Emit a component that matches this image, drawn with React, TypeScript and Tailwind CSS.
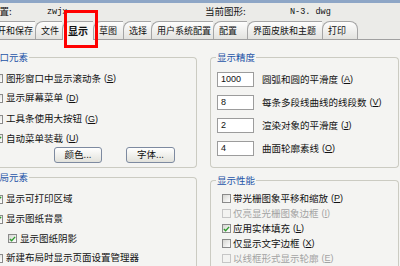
import React from "react";

const LINE = "border-[#cbcbc2]";

function Mn({ k }: { k: string }) {
  return (
    <span className="ml-[3px] font-['Liberation_Sans',sans-serif] text-[9px]">
      (<span className="underline">{k}</span>)
    </span>
  );
}

function Check({ checked, disabled }: { checked?: boolean; disabled?: boolean }) {
  return (
    <span
      className={`shrink-0 w-[9px] h-[9px] border flex items-center justify-center ${
        disabled
          ? "border-[#c6c6c6] bg-[#f3f3f1]"
          : "border-[#8a8a8a] bg-gradient-to-br from-[#d6d6d2] to-[#ffffff]"
      }`}
    >
      {checked && (
        <svg width="8" height="8" viewBox="0 0 8 8">
          <path d="M1 4 L3 6 L7 1.5" stroke="#2c9a2c" strokeWidth="1.5" fill="none" />
        </svg>
      )}
    </span>
  );
}

function Group({
  title,
  className,
  bodyClass,
  children,
}: {
  title: string;
  className?: string;
  bodyClass?: string;
  children: React.ReactNode;
}) {
  return (
    <div className={`flex flex-col ${className ?? ""}`}>
      <div className="flex items-center h-[11px]">
        <div className={`w-[6px] h-[6px] self-end border-l border-t ${LINE} rounded-tl-[4px] shrink-0`} />
        <span className="px-[1px] text-[#1f55a8] whitespace-nowrap">{title}</span>
        <div className={`flex-1 h-[6px] self-end border-t border-r ${LINE} rounded-tr-[4px]`} />
      </div>
      <div className={`border-l border-r border-b ${LINE} rounded-b-[4px] ${bodyClass ?? ""}`}>{children}</div>
    </div>
  );
}

function Tab({ label, w, active, last }: { label: string; w: string; active?: boolean; last?: boolean }) {
  return (
    <div
      className={`${w} shrink-0 flex items-center pl-[5px] whitespace-nowrap overflow-hidden border-l border-t border-[#a5a5a5] rounded-tl-[8px] ${
        last ? "border-r rounded-tr-[8px]" : ""
      } ${
        active
          ? "h-[19px] -mb-px bg-[#f6f6f4] font-bold text-[10px]"
          : "h-[18px] text-[9px] bg-gradient-to-b from-[#fdfdfd] to-[#e3e3df]"
      }`}
    >
      {label}
    </div>
  );
}

function LeftItem({ label, k, checked, h, indent }: { label: string; k: string; checked?: boolean; h: string; indent?: boolean }) {
  return (
    <div className={`${h} flex items-center ${indent ? "pl-[24px]" : "pl-[10px]"}`}>
      <Check checked={checked} />
      <span className="ml-[3px] whitespace-nowrap">{label}</span>
      {k && <Mn k={k} />}
    </div>
  );
}

function RightCheck({ label, k, checked, disabled }: { label: string; k: string; checked?: boolean; disabled?: boolean }) {
  return (
    <div className={`h-[15px] flex items-center pl-[11px] ${disabled ? "text-[#a3a3a3]" : ""}`}>
      <Check checked={checked} disabled={disabled} />
      <span className="ml-[2px] whitespace-nowrap">{label}</span>
      <Mn k={k} />
    </div>
  );
}

function InputRow({ value, label, k }: { value: string; label: string; k: string }) {
  return (
    <div className="h-[23px] flex items-start pl-[6px]">
      <div className="w-[37px] h-[15px] shrink-0 border border-[#9c9c9c] bg-white flex items-center pl-[3px] font-['Liberation_Sans',sans-serif] text-[9px]">
        {value}
      </div>
      <div className="ml-[8px] h-[15px] flex items-center whitespace-nowrap">
        {label}
        <Mn k={k} />
      </div>
    </div>
  );
}

function Btn({ label, w }: { label: string; w: string }) {
  return (
    <div
      className={`${w} h-[16px] shrink-0 border border-[#7d8aa0] rounded-[3px] bg-gradient-to-b from-[#ffffff] to-[#e2e2dc] flex items-center justify-center`}
    >
      {label}
    </div>
  );
}

export default function App() {
  return (
    <div className="relative w-[400px] h-[266px] overflow-hidden bg-[#f4f4f2] text-[9.5px] leading-none text-[#111] font-['Noto_Sans_CJK_SC','Noto_Sans',sans-serif]">
      <div className="h-[3px] bg-[#8ea6c6]" />
      <div className="h-[18px] flex items-center bg-[#ebebe8]">
        <span className="-ml-[29px] w-[76px] shrink-0 whitespace-nowrap">当前配置:</span>
        <span className="w-[158px] shrink-0 font-['Liberation_Mono',monospace] text-[8.5px]">zwjx</span>
        <span className="w-[85px] shrink-0 whitespace-nowrap">当前图形:</span>
        <span className="font-['Liberation_Mono',monospace] text-[8.5px]">N-3. dwg</span>
      </div>
      <div className="h-[19px] flex items-end bg-[#ebebe8] border-b border-[#a0a0a0]">
        <div className="-ml-[18px] flex items-end">
          <Tab label="打开和保存" w="w-[53px]" />
          <Tab label="文件" w="w-[27px]" />
          <Tab label="显示" w="w-[31px]" active />
          <Tab label="草图" w="w-[30px]" />
          <Tab label="选择" w="w-[28px]" />
          <Tab label="用户系统配置" w="w-[62px]" />
          <Tab label="配置" w="w-[34px]" />
          <Tab label="界面皮肤和主题" w="w-[75px]" />
          <Tab label="打印" w="w-[36px]" last />
        </div>
      </div>

      <div className="flex">
        <div className="-ml-[17px] w-[214px] shrink-0 flex flex-col">
          <Group title="窗口元素" className="mt-[12px]" bodyClass="pt-[6px] pb-[4px]">
            <LeftItem h="h-[19px]" label="图形窗口中显示滚动条" k="S" />
            <LeftItem h="h-[20px]" label="显示屏幕菜单" k="D" />
            <LeftItem h="h-[22px]" label="工具条使用大按钮" k="G" />
            <LeftItem h="h-[17px]" label="自动菜单装载" k="U" checked />
            <div className="h-[16px] flex pl-[70px] gap-[24px]">
              <Btn label="颜色..." w="w-[48px]" />
              <Btn label="字体..." w="w-[49px]" />
            </div>
          </Group>
          <Group title="布局元素" className="mt-[4px]" bodyClass="pt-[6px] h-[90px]">
            <LeftItem h="h-[20px]" label="显示可打印区域" k="" checked />
            <LeftItem h="h-[20px]" label="显示图纸背景" k="" checked />
            <LeftItem h="h-[19px]" label="显示图纸阴影" k="" checked indent />
            <LeftItem h="h-[20px]" label="新建布局时显示页面设置管理器" k="" />
          </Group>
        </div>

        <div className="ml-[13px] w-[189px] shrink-0 flex flex-col">
          <Group title="显示精度" className="mt-[12px]" bodyClass="pt-[9px] pb-[3px]">
            <InputRow value="1000" label="圆弧和圆的平滑度" k="A" />
            <InputRow value="8" label="每条多段线曲线的线段数" k="V" />
            <InputRow value="2" label="渲染对象的平滑度" k="J" />
            <InputRow value="4" label="曲面轮廓素线" k="O" />
          </Group>
          <Group title="显示性能" className="mt-[7px]" bodyClass="pt-[5px] h-[90px]">
            <RightCheck label="带光栅图象平移和缩放" k="P" />
            <RightCheck label="仅亮显光栅图象边框" k="I" disabled />
            <RightCheck label="应用实体填充" k="L" checked />
            <RightCheck label="仅显示文字边框" k="X" />
            <RightCheck label="以线框形式显示轮廓" k="E" disabled />
          </Group>
        </div>
      </div>

      <div className="absolute left-[64px] top-[10px] w-[34px] h-[38px] border-[3px] border-[#ff0000]" />
    </div>
  );
}
